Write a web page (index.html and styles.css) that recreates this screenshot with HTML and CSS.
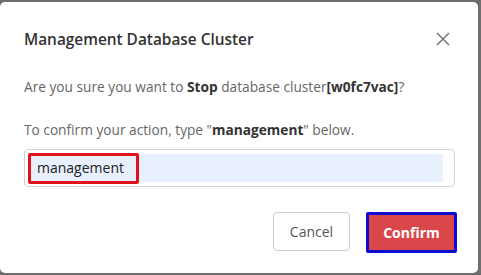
FILE: index.html
```html
<!DOCTYPE html>
<html lang="en">
<head>
    <meta charset="UTF-8">
    <title>Management Database Cluster</title>
    <link rel="stylesheet" href="styles.css">
</head>
<body>

    <!-- Confirm dialog -->
    <div class="modal">
        <div class="modal-header">
            <h2 class="modal-title">Management Database Cluster</h2>
            <span class="modal-close">
                <svg width="14" height="14" viewBox="0 0 14 14">
                    <path d="M1 1 L13 13 M13 1 L1 13" stroke="#7a7a7a" stroke-width="1.6" fill="none"/>
                </svg>
            </span>
        </div>

        <div class="modal-body">
            <p>Are you sure you want to <b>Stop</b> database cluster<b>[w0fc7vac]</b>?</p>
            <p class="last">To confirm your action, type "<b>management</b>" below.</p>

            <div class="confirm-input">
                <div class="confirm-fill">
                    <span class="confirm-value">management</span>
                </div>
            </div>
        </div>

        <div class="modal-footer">
            <button class="btn btn-cancel">Cancel</button>
            <button class="btn btn-confirm">Confirm</button>
        </div>
    </div>

</body>
</html>
```

FILE: styles.css
```css
/* General */
body {
    margin: 0;
    padding: 2px 3px 2px 0;
    background-color: #6e6e6e;
    font-family: 'Open Sans', sans-serif;
}

/* Dialog box */
.modal {
    box-sizing: border-box;
    width: 478px;
    height: 271px;
    background-color: #fff;
    border-radius: 5px;
    padding: 0 24px;
}

.modal-header {
    display: flex;
    align-items: center;
    justify-content: space-between;
    height: 74px;
}

.modal-title {
    margin: 0;
    font-size: 15.4px;
    font-weight: 600;
    color: #333;
}

.modal-close {
    display: flex;
    margin-right: 4px;
}

.modal-body p {
    margin: 0 0 21px;
    font-size: 13.7px;
    line-height: 22px;
    color: #666;
}

.modal-body p.last {
    margin-bottom: 8px;
}

.modal-body b {
    font-weight: 700;
    color: #333;
}

/* Fake autofilled input */
.confirm-input {
    box-sizing: border-box;
    width: 431px;
    height: 38px;
    border: 1px solid #d4d4d4;
    border-radius: 4px;
    padding: 4px 11px 4px 4px;
}

.confirm-fill {
    height: 28px;
    background-color: #e8f0fe;
    display: flex;
    align-items: center;
}

.confirm-value {
    box-sizing: border-box;
    height: 31px;
    width: 111px;
    margin-left: -1px;
    padding: 0 0 0 6px;
    border: 3px solid #e0121b;
    border-radius: 2px;
    font-size: 14px;
    line-height: 24px;
    color: #222;
}

/* Buttons */
.modal-footer {
    display: flex;
    justify-content: flex-end;
    gap: 16px;
    margin-top: 25px;
}

.btn {
    font-family: 'Open Sans', sans-serif;
    font-size: 14px;
    height: 39px;
    border-radius: 4px;
    cursor: pointer;
}

.btn-cancel {
    width: 77px;
    background-color: #fff;
    border: 1px solid #ccc;
    color: #555;
}

.btn-confirm {
    width: 91px;
    height: 41px;
    background-color: #d9474b;
    border: 3px solid #0a0ad0;
    border-radius: 2px;
    color: #fff;
    font-weight: 700;
    margin-right: -3px;
}
```
